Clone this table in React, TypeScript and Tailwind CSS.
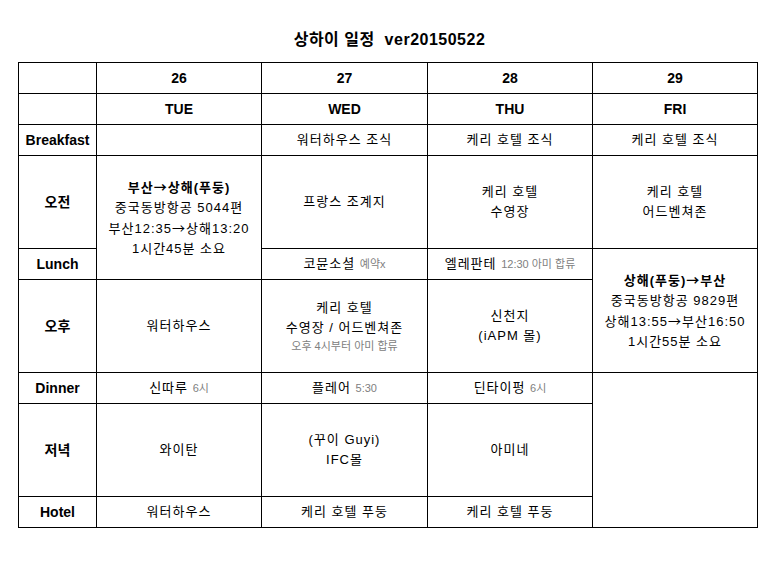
const cell = "border border-black text-center align-middle p-0 tracking-[1px]"
const label = "border border-black text-center align-middle p-0 font-bold text-[14px]"

function Sub({ children }: { children: React.ReactNode }) {
  return <span className="text-[11px] tracking-normal text-[#808080]">{children}</span>
}

function Arrow() {
  return <span style={{ fontFamily: '"Noto Sans CJK KR", sans-serif' }}>→</span>
}

export default function App() {
  return (
    <div
      className="w-[779px] h-[570px] bg-white text-black"
      style={{ fontFamily: '"Liberation Sans", "Noto Sans CJK KR", sans-serif' }}
    >
      <h1 className="pt-[28px] h-[62px] text-center text-[16px] font-bold leading-[24px] tracking-[0.5px]">
        상하이 일정&nbsp;&nbsp;ver20150522
      </h1>

      <table className="ml-[18px] w-[739px] table-fixed border-collapse text-[13px] leading-[20px]">
        <colgroup>
          <col className="w-[78px]" />
          <col className="w-[165px]" />
          <col className="w-[166px]" />
          <col className="w-[165px]" />
          <col className="w-[165px]" />
        </colgroup>
        <tbody>
          <tr className="h-[31px]">
            <td className={cell}></td>
            <td className={label}>26</td>
            <td className={label}>27</td>
            <td className={label}>28</td>
            <td className={label}>29</td>
          </tr>
          <tr className="h-[31px]">
            <td className={cell}></td>
            <td className={label}>TUE</td>
            <td className={label}>WED</td>
            <td className={label}>THU</td>
            <td className={label}>FRI</td>
          </tr>
          <tr className="h-[31px]">
            <td className={label}>Breakfast</td>
            <td className={cell}></td>
            <td className={cell}>워터하우스 조식</td>
            <td className={cell}>케리 호텔 조식</td>
            <td className={cell}>케리 호텔 조식</td>
          </tr>
          <tr className="h-[93px]">
            <td className={label}>오전</td>
            <td className={cell} rowSpan={2}>
              <div className="font-bold">부산<Arrow />상해(푸둥)</div>
              <div>중국동방항공 5044편</div>
              <div>부산12:35<Arrow />상해13:20</div>
              <div>1시간45분 소요</div>
            </td>
            <td className={cell}>프랑스 조계지</td>
            <td className={cell}>
              <div>케리 호텔</div>
              <div>수영장</div>
            </td>
            <td className={cell}>
              <div>케리 호텔</div>
              <div>어드벤쳐존</div>
            </td>
          </tr>
          <tr className="h-[31px]">
            <td className={label}>Lunch</td>
            <td className={cell}>
              코뮨소셜 <Sub>예약x</Sub>
            </td>
            <td className={cell}>
              엘레판테 <Sub>12:30 아미 합류</Sub>
            </td>
            <td className={cell} rowSpan={2}>
              <div className="font-bold">상해(푸둥)<Arrow />부산</div>
              <div>중국동방항공 9829편</div>
              <div>상해13:55<Arrow />부산16:50</div>
              <div>1시간55분 소요</div>
            </td>
          </tr>
          <tr className="h-[93px]">
            <td className={label}>오후</td>
            <td className={cell}>워터하우스</td>
            <td className={cell}>
              <div>케리 호텔</div>
              <div>수영장 / 어드벤쳐존</div>
              <div className="text-[11px] leading-[16px] tracking-normal text-[#808080]">오후 4시부터 아미 합류</div>
            </td>
            <td className={cell}>
              <div>신천지</div>
              <div>(iAPM 몰)</div>
            </td>
          </tr>
          <tr className="h-[31px]">
            <td className={label}>Dinner</td>
            <td className={cell}>
              신따루 <Sub>6시</Sub>
            </td>
            <td className={cell}>
              플레어 <Sub>5:30</Sub>
            </td>
            <td className={cell}>
              딘타이펑 <Sub>6시</Sub>
            </td>
            <td className={cell} rowSpan={3}></td>
          </tr>
          <tr className="h-[93px]">
            <td className={label}>저녁</td>
            <td className={cell}>와이탄</td>
            <td className={cell}>
              <div>(꾸이 Guyi)</div>
              <div>IFC몰</div>
            </td>
            <td className={cell}>아미네</td>
          </tr>
          <tr className="h-[31px]">
            <td className={label}>Hotel</td>
            <td className={cell}>워터하우스</td>
            <td className={cell}>케리 호텔 푸둥</td>
            <td className={cell}>케리 호텔 푸둥</td>
          </tr>
        </tbody>
      </table>
    </div>
  )
}
